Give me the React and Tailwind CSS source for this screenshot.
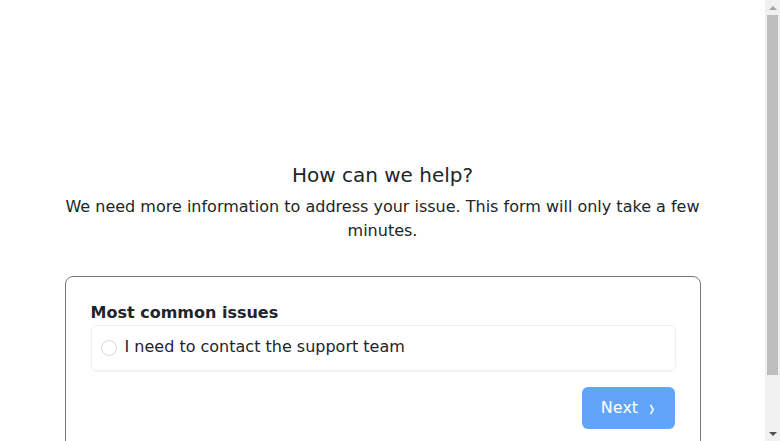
export default function App() {
  return (
    <div className="min-h-screen bg-white text-[#212529] font-['DejaVu_Sans',sans-serif] pt-[161px] pb-[50px] pr-[15px]">
      <div className="w-[636px] mx-auto">
        <h1 className="text-center text-[20px] leading-[28px] mb-[6px]">How can we help?</h1>
        <p className="text-center text-[16px] leading-[24px]">
          We need more information to address your issue. This form will only take a few minutes.
        </p>

        {/* Form card */}
        <div className="mt-[33px] border border-[#777] rounded-[8px] pl-[25px] pr-6 pt-6 pb-6">
          <h2 className="font-bold text-[16px] leading-[24px]">Most common issues</h2>

          <label className="flex items-center h-[46px] px-[9px] border border-[#efefef] rounded-[6px] shadow-[0_1px_2px_rgba(0,0,0,0.05)] cursor-pointer">
            <span className="w-[16px] h-[16px] rounded-full border border-[#d4d8de] bg-white shrink-0"></span>
            <span className="ml-[8px] mb-[3px] text-[16px] leading-[24px]">I need to contact the support team</span>
          </label>

          <div className="flex justify-end mt-[16px]">
            <button className="flex items-center justify-center h-[42px] w-[93px] mr-px rounded-[6px] bg-[#60a5fa] text-white text-[16px]">
              <span className="-mt-[1px]">Next</span>
              <svg width="6" height="11" viewBox="0 0 6 11" className="ml-[11px] mt-[2px]">
                <path d="M1.8 1.5 L4.2 5.5 L1.8 9.5" fill="none" stroke="white" strokeWidth="1.5" strokeLinecap="round" strokeLinejoin="round" />
              </svg>
            </button>
          </div>
        </div>
      </div>

      {/* browser scrollbar */}
      <div className="fixed top-0 right-0 w-[15px] h-screen bg-[#f0f0f0] flex flex-col items-center">
        <div className="h-[15px] flex items-center justify-center">
          <div className="w-0 h-0 border-l-[4px] border-r-[4px] border-b-[4px] border-l-transparent border-r-transparent border-b-[#a3a3a3]"></div>
        </div>
        <div className="w-[11px] h-[360px] bg-[#bdbdbd]"></div>
        <div className="flex-1"></div>
        <div className="h-[15px] flex items-center justify-center">
          <div className="w-0 h-0 border-l-[4px] border-r-[4px] border-t-[4px] border-l-transparent border-r-transparent border-t-[#505050]"></div>
        </div>
      </div>
    </div>
  );
}
